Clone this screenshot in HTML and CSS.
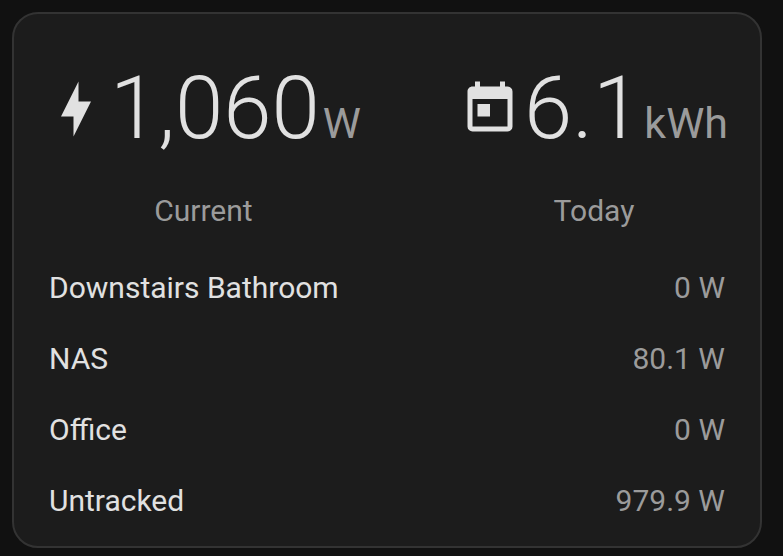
FILE: index.html
```html
<!DOCTYPE html>
<html lang="en">
<head>
<meta charset="utf-8">
<meta name="viewport" content="width=device-width, initial-scale=1">
<title>Power usage</title>
<link rel="stylesheet" href="styles.css">
</head>
<body>
<main class="card">
  <section class="totals">
    <div class="total">
      <div class="reading">
        <svg class="icon" viewBox="0 0 24 24" aria-hidden="true"><path d="M11 15H6L13 1V9H18L11 23V15Z"/></svg>
        <span class="value">1,060</span><span class="unit">W</span>
      </div>
      <div class="label">Current</div>
    </div>
    <div class="total">
      <div class="reading">
        <svg class="icon" viewBox="0 0 24 24" aria-hidden="true"><path d="M19 19H5V8H19M19 3H18V1H16V3H8V1H6V3H5C3.89 3 3 3.9 3 5V19A2 2 0 0 0 5 21H19A2 2 0 0 0 21 19V5A2 2 0 0 0 19 3M7 10H12V15H7"/></svg>
        <span class="value">6.1</span><span class="unit">kWh</span>
      </div>
      <div class="label">Today</div>
    </div>
  </section>
  <dl class="devices">
    <div class="device"><dt>Downstairs Bathroom</dt><dd>0 W</dd></div>
    <div class="device"><dt>NAS</dt><dd>80.1 W</dd></div>
    <div class="device"><dt>Office</dt><dd>0 W</dd></div>
    <div class="device"><dt>Untracked</dt><dd>979.9 W</dd></div>
  </dl>
</main>
</body>
</html>
```
FILE: styles.css
```css
* {
  box-sizing: border-box;
}

body {
  margin: 0;
  padding: 12px 21px 8px 12px;
  background: #111111;
  color: #e1e1e1;
  font-family: Roboto, sans-serif;
  font-size: 30px;
  line-height: 35px;
}

.card {
  padding: 42px 35px 28px;
  background: #1c1c1c;
  border: 2px solid #333333;
  border-radius: 26px;
}

.totals {
  display: flex;
  justify-content: space-between;
  margin: 0 -3px;
}

.total {
  display: flex;
  flex-direction: column;
  align-items: center;
}

.reading {
  display: flex;
  align-items: baseline;
  line-height: 104px;
}

.icon {
  width: 60px;
  height: 60px;
  align-self: center;
  margin: 0 4px 14px 0;
  fill: #e1e1e1;
}

.value {
  font-size: 87px;
  font-weight: 300;
}

.unit {
  margin-left: 3px;
  color: #9b9b9b;
  font-size: 43px;
}

.label {
  margin-top: 18px;
  color: #9b9b9b;
}

.devices {
  display: grid;
  gap: 36px;
  margin: 42px 0 0;
}

.device {
  display: flex;
  justify-content: space-between;
}

.device dd {
  margin: 0;
  color: #9b9b9b;
}
```
